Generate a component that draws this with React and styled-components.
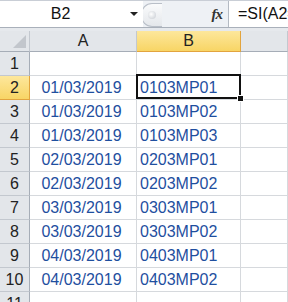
import React from "react";
import styled, { createGlobalStyle } from "styled-components";

const Global = createGlobalStyle`
  html, body { margin: 0; padding: 0; background: #fff; overflow: hidden; }
  body { font-family: "Liberation Sans", Arial, sans-serif; }
`;

const Page = styled.div`
  width: 288px;
  height: 302px;
  overflow: hidden;
  display: flex;
  flex-direction: column;
  background: #fff;
  & > * { flex: none; }
`;

const FormulaBar = styled.div`
  height: 26px;
  display: flex;
  border-top: 1px solid #c9ced6;
  border-bottom: 1px solid #a9b0ba;
  background: #eef1f5;
`;

const NameBox = styled.div`
  width: 143px;
  display: flex;
  align-items: center;
  background: #fff;
  position: relative;
`;

const NameText = styled.span`
  flex: 1;
  text-align: center;
  font-size: 16px;
  color: #111;
  padding-right: 22px;
`;

const DropArrow = styled.span`
  position: absolute;
  right: 5px;
  top: 11px;
  width: 0;
  height: 0;
  border-left: 4px solid transparent;
  border-right: 4px solid transparent;
  border-top: 4px solid #222;
`;

const Grip = styled.div`
  width: 20px;
  height: 22px;
  margin: 2px 0 0 -2px;
  border-radius: 11px 0 0 11px;
  border: 1px solid #b9bfc8;
  border-right: none;
  background: linear-gradient(#fafbfc, #e4e7eb);
  display: flex;
  align-items: center;
  justify-content: center;
`;

const GripDot = styled.span`
  width: 8px;
  height: 8px;
  border-radius: 50%;
  background: radial-gradient(circle at 40% 40%, #fff, #c4c9d0);
`;

const Spacer = styled.div`
  flex: 1;
`;

const Fx = styled.span`
  width: 18px;
  font-family: "Liberation Serif", "Times New Roman", serif;
  font-style: italic;
  font-weight: bold;
  font-size: 15px;
  color: #333;
  display: flex;
  align-items: center;
  justify-content: flex-end;
  letter-spacing: -1px;
`;

const Formula = styled.div`
  width: 50px;
  margin-left: 6px;
  border-left: 1px solid #b4bac3;
  background: #fff;
  display: flex;
  align-items: center;
  padding-left: 9px;
  font-size: 16px;
  color: #111;
  white-space: nowrap;
  overflow: hidden;
`;

const Strip = styled.div`
  height: 3px;
  background: #e6e9ed;
`;

const Grid = styled.div`
  display: grid;
  grid-template-columns: 30px 107px 104px 1fr;
  grid-template-rows: 21px;
  grid-auto-rows: 24px;
`;

const Corner = styled.div`
  background: #e3e6ea;
  border-right: 1px solid #c3c8cf;
  border-bottom: 1px solid #a6adb7;
  position: relative;
  &::after {
    content: "";
    position: absolute;
    right: 3px;
    bottom: 3px;
    width: 0;
    height: 0;
    border-left: 13px solid transparent;
    border-bottom: 13px solid #c2c6cc;
  }
`;

const ColHead = styled.div`
  display: flex;
  align-items: center;
  justify-content: center;
  font-size: 16px;
  color: #222;
  border-right: 1px solid ${(p) => (p.$active ? "#e2a43e" : "#c3c8cf")};
  border-bottom: 1px solid ${(p) => (p.$active ? "#e2a43e" : "#a6adb7")};
  background: ${(p) =>
    p.$active ? "linear-gradient(#fde79c, #f8d565)" : "#e3e6ea"};
`;

const RowHead = styled.div`
  display: flex;
  align-items: center;
  justify-content: center;
  font-size: 16px;
  color: #222;
  border-right: 1px solid ${(p) => (p.$active ? "#e2a43e" : "#a6adb7")};
  border-bottom: 1px solid ${(p) => (p.$active ? "#e2a43e" : "#c3c8cf")};
  background: ${(p) =>
    p.$active ? "linear-gradient(#fde79c, #f8d565)" : "#e3e6ea"};
`;

const Cell = styled.div`
  display: flex;
  align-items: center;
  justify-content: ${(p) => (p.$center ? "center" : "flex-start")};
  padding-left: ${(p) => (p.$center ? "0" : "3px")};
  padding-right: ${(p) => (p.$center ? "3px" : "0")};
  font-size: 16px;
  color: #1f4f9f;
  border-right: 1px solid #d6d9dd;
  border-bottom: 1px solid #d6d9dd;
  position: relative;
  white-space: nowrap;
  ${(p) =>
    p.$selected &&
    `
    &::before {
      content: "";
      position: absolute;
      left: -1px;
      right: -1px;
      top: -2px;
      bottom: 0;
      border: 2px solid #111;
      pointer-events: none;
    }
  `}
`;

const FillHandle = styled.span`
  position: absolute;
  right: -4px;
  bottom: -3px;
  width: 5px;
  height: 5px;
  background: #111;
  border: 1px solid #fff;
  z-index: 2;
`;

const rows = [
  ["", ""],
  ["01/03/2019", "0103MP01"],
  ["01/03/2019", "0103MP02"],
  ["01/03/2019", "0103MP03"],
  ["02/03/2019", "0203MP01"],
  ["02/03/2019", "0203MP02"],
  ["03/03/2019", "0303MP01"],
  ["03/03/2019", "0303MP02"],
  ["04/03/2019", "0403MP01"],
  ["04/03/2019", "0403MP02"],
  ["", ""],
];

export default function App() {
  return (
    <Page>
      <Global />
      <FormulaBar>
        <NameBox>
          <NameText>B2</NameText>
          <DropArrow />
        </NameBox>
        <Grip>
          <GripDot />
        </Grip>
        <Spacer />
        <Fx>fx</Fx>
        <Formula>=SI(A2=</Formula>
      </FormulaBar>
      <Strip />
      <Grid>
        <Corner />
        <ColHead>A</ColHead>
        <ColHead $active>B</ColHead>
        <ColHead />
        {rows.map((r, i) => {
          const n = i + 1;
          const sel = n === 2;
          return (
            <React.Fragment key={n}>
              <RowHead $active={sel}>{n}</RowHead>
              <Cell $center>{r[0]}</Cell>
              <Cell $selected={sel}>
                {r[1]}
                {sel && <FillHandle />}
              </Cell>
              <Cell />
            </React.Fragment>
          );
        })}
      </Grid>
    </Page>
  );
}
